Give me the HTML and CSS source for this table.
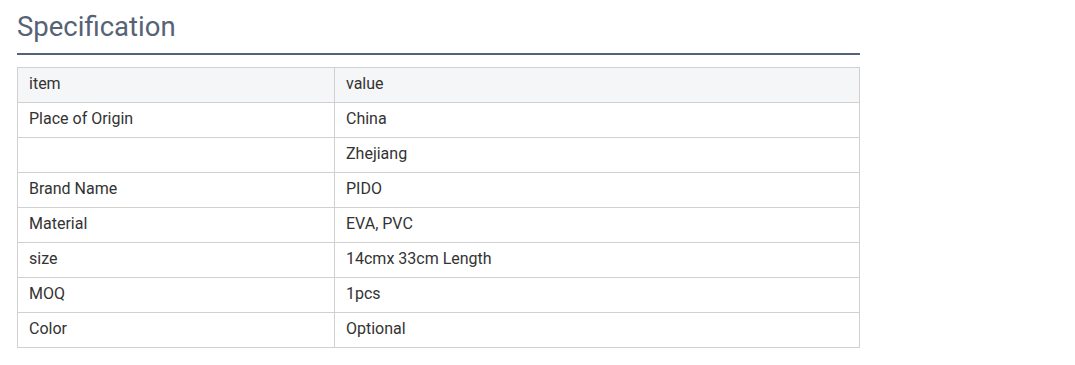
FILE: index.html
```html
<!DOCTYPE html>
<html>
<head>
<meta charset="utf-8">
<link rel="stylesheet" href="styles.css">
</head>
<body>
<div class="spec">
  <h2 class="spec-title">Specification</h2>
  <table class="spec-table">
    <tr class="head"><td>item</td><td>value</td></tr>
    <tr><td>Place of Origin</td><td>China</td></tr>
    <tr><td></td><td>Zhejiang</td></tr>
    <tr><td>Brand Name</td><td>PIDO</td></tr>
    <tr><td>Material</td><td>EVA, PVC</td></tr>
    <tr><td>size</td><td>14cmx 33cm Length</td></tr>
    <tr><td>MOQ</td><td>1pcs</td></tr>
    <tr><td>Color</td><td>Optional</td></tr>
  </table>
</div>
</body>
</html>
```
FILE: styles.css
```css
html, body {
  margin: 0;
  padding: 0;
  background: #fff;
}
.spec {
  width: 843px;
  margin-left: 17px;
  font-family: Roboto, "Liberation Sans", sans-serif;
}
.spec-title {
  margin: 0;
  padding-top: 9px;
  height: 44px;
  font-size: 27.5px;
  font-weight: 400;
  line-height: 36px;
  color: #566275;
  border-bottom: 2px solid #566275;
  box-sizing: content-box;
}
.spec-table {
  margin-top: 12px;
  width: 843px;
  border-collapse: collapse;
  font-size: 16px;
  color: #333;
}
.spec-table td {
  border: 1px solid #d0d0d0;
  height: 35px;
  padding: 0 11px 3px;
  box-sizing: border-box;
}
.spec-table td:first-child {
  width: 317px;
}
.spec-table .head td {
  background: #f5f6f8;
}
```
